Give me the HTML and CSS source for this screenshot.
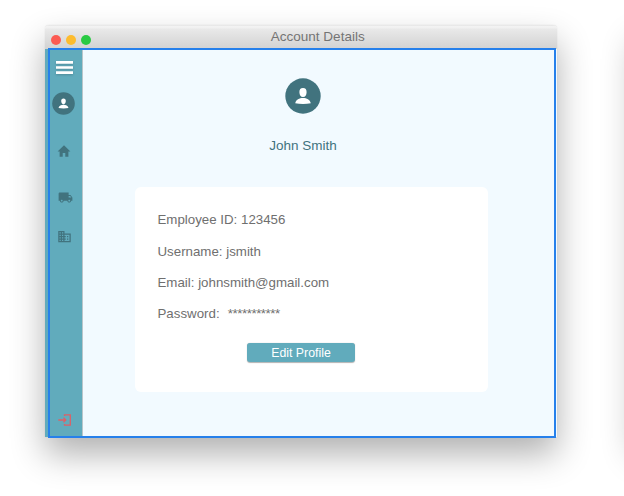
FILE: index.html
```html
<!DOCTYPE html>
<html lang="en">
<head>
<meta charset="utf-8">
<title>Account Details</title>
<link rel="stylesheet" href="styles.css">
</head>
<body>
<svg class="symbols" aria-hidden="true">
  <symbol id="avatar" viewBox="0 0 36 36">
    <circle cx="18" cy="18" r="17.7" fill="#41737e"/>
    <path d="M18 10c-2.500 0-3.700 1.600-3.600 4.200.1 2.800 1.300 4.900 3.600 4.900s3.500-2.100 3.600-4.900c.1-2.600-1.100-4.200-3.600-4.200zM10.200 25.200c.8-3.500 4.100-5.100 7.800-5.100s7 1.600 7.800 5.100c-4.600 1-11 1-15.600 0z" fill="#fff"/>
  </symbol>
</svg>
<main class="canvas">
  <section class="window">
    <header class="titlebar">
      <div class="lights"><i class="red"></i><i class="yellow"></i><i class="green"></i></div>
      <h1>Account Details</h1>
    </header>
    <div class="body">
      <nav class="sidebar">
        <svg class="menu" viewBox="0 0 17 13"><path d="M0 1.400h17M0 6.500h17M0 11.600h17"/></svg>
        <svg class="avatar-small"><use href="#avatar"/></svg>
        <svg class="icon home" viewBox="0 0 24 24"><path d="M9.800 22v-6.500h4.400V22h5.300v-9H23L12 2 1 13h3.500v9z"/></svg>
        <svg class="icon truck" viewBox="0 0 24 24"><path d="M20 8h-3V4H3c-1.100 0-2 .9-2 2v11h2c0 1.660 1.340 3 3 3s3-1.340 3-3h6c0 1.660 1.340 3 3 3s3-1.340 3-3h2v-5l-3-4zM6 18.500c-.83 0-1.500-.67-1.500-1.500s.67-1.500 1.500-1.500 1.500.67 1.500 1.500-.67 1.500-1.500 1.500zm13.500-9 1.960 2.500H17V9.500h2.500zm-1.500 9c-.83 0-1.500-.67-1.500-1.500s.67-1.500 1.500-1.500 1.500.67 1.500 1.500-.67 1.500-1.500 1.500z"/></svg>
        <svg class="icon office" viewBox="0 0 24 24"><path d="M12 7V3H2v18h20V7H12zM6 19H4v-2h2v2zm0-4H4v-2h2v2zm0-4H4V9h2v2zm0-4H4V5h2v2zm4 12H8v-2h2v2zm0-4H8v-2h2v2zm0-4H8V9h2v2zm0-4H8V5h2v2zm10 12h-8v-2h2v-2h-2v-2h2v-2h-2V9h8v10zm-2-8h-2v2h2v-2zm0 4h-2v2h2v-2z"/></svg>
        <svg class="logout" viewBox="0 0 14 12"><path d="M6.500 2V.8h5.800v10.400H6.500V10M.3 6H7.500M5.500 3.800 7.800 6 5.500 8.200"/></svg>
      </nav>
      <div class="content">
        <svg class="avatar-large"><use href="#avatar"/></svg>
        <h2>John Smith</h2>
        <div class="card">
          <p class="employee">Employee ID: 123456</p>
          <p>Username: jsmith</p>
          <p>Email: johnsmith@gmail.com</p>
          <p>Password: <span class="secret">***********</span></p>
          <button type="button">Edit Profile</button>
        </div>
      </div>
    </div>
    <div class="selection"></div>
  </section>
  <section class="next-window"></section>
</main>
</body>
</html>
```
FILE: styles.css
```css
* { box-sizing: border-box; }
body {
  margin: 0;
  background: #fff;
  color: #6f6f6f;
  font: 13.3px/16px "Liberation Sans", Arial, sans-serif;
}
h1, h2, p { margin: 0; font-weight: 400; font-size: 13.3px; }
h1, h2 { font-size: 13.5px; }
.symbols { display: none; }
.canvas {
  display: flex;
  gap: 79px;
  width: 624px;
  height: 496px;
  padding: 25px 0 59px 45px;
  overflow: hidden;
}
.window, .next-window {
  flex: none;
  width: 511.5px;
  height: 412px;
  border-radius: 4px 4px 0 0;
  box-shadow: 0 17px 34px rgba(0, 0, 0, .31), 0 0 1px rgba(0, 0, 0, .2);
}
.window { position: relative; }
.titlebar {
  display: grid;
  grid-template-columns: 80px 1fr 46px;
  height: 24px;
  border-radius: 4px 4px 0 0;
  background: linear-gradient(#dedede 0, #f3f3f3 1px, #f0f0f0 3px, #e9e9e9 4px, #d2d2d2 24px);
}
.titlebar h1 { padding-top: 4px; text-align: center; color: #747474; }
.lights { display: flex; gap: 5px; padding: 9.500px 0 0 6px; }
.lights i { width: 10px; height: 10px; border-radius: 50%; }
.red { background: #fc5b53; }
.yellow { background: #fdbc2f; }
.green { background: #29ca43; }
.body { display: flex; height: 388px; }
.sidebar {
  display: flex;
  flex-direction: column;
  align-items: flex-start;
  width: 38px;
  padding-top: 12px;
  border-right: 1px solid #b9c5ca;
  background: #61abbc;
}
.menu {
  width: 17px;
  height: 13px;
  margin: 0 0 18px 11px;
  fill: none;
  stroke: #fff;
  stroke-width: 2.600;
  filter: drop-shadow(0 1px 1px rgba(0, 0, 0, .18));
}
.avatar-small { width: 23px; height: 23px; margin: 0 0 29px 7px; }
.icon { fill: #41737e; width: 14px; height: 14px; }
.home { margin: 0 0 32px 12px; }
.truck { width: 15px; height: 15px; margin: 0 0 24px 13px; }
.office { width: 15px; height: 15px; margin-left: 12px; }
.logout {
  width: 14px;
  height: 12px;
  margin: auto 0 11px 13px;
  fill: none;
  stroke: #dd6066;
  stroke-width: 1.300;
}
.content {
  display: flex;
  flex-direction: column;
  width: 473.5px;
  background: #f2faff;
}
.avatar-large { width: 36px; height: 36px; margin: 29px 0 0 202px; }
.content h2 { width: 440px; margin-top: 24px; text-align: center; color: #41737e; }
.card {
  width: 352.5px;
  height: 205px;
  margin: 33px 0 0 52px;
  padding: 25px 0 0 22.5px;
  border-radius: 6px;
  background: #fff;
}
.card p { margin-bottom: 15px; white-space: pre; }
.card .employee { margin-bottom: 16px; }
.secret { margin-left: 4.500px; letter-spacing: -.45px; }
.card button {
  display: block;
  width: 108px;
  height: 19px;
  margin: 21px 0 0 89.5px;
  padding: 0;
  border: 0;
  border-radius: 3px;
  background: #61abbc;
  box-shadow: 0 .5px 1px rgba(0, 0, 0, .3);
  color: #fff;
  font: 12.3px/20px "Liberation Sans", Arial, sans-serif;
}
.selection {
  position: absolute;
  inset: 23px .5px -1px 3px;
  border: 2px solid #2680eb;
}
```
